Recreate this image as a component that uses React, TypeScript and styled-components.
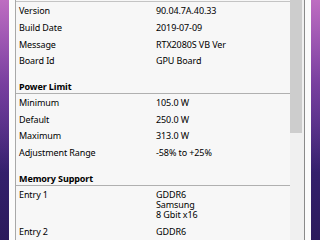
import React from "react";
import styled, { createGlobalStyle } from "styled-components";

const Global = createGlobalStyle`
  html, body { margin: 0; padding: 0; }
  body {
    width: 320px;
    height: 240px;
    overflow: hidden;
    background:
      linear-gradient(180deg, rgba(196,112,196,0.95) 0%, rgba(150,76,176,0.65) 35%, rgba(40,20,90,0) 72%),
      linear-gradient(180deg, #4a2a8e 0%, #3b2478 50%, #2b1a5c 100%);
  }
`;

const Desktop = styled.div`
  width: 320px;
  height: 240px;
  display: flex;
  padding-left: 9px;
  box-sizing: border-box;
  overflow: hidden;
`;

const Window = styled.div`
  width: 302px;
  height: 240px;
  background: #fbfbfb;
  padding: 0 6px;
  box-sizing: border-box;
  display: flex;
`;

const Panel = styled.div`
  flex: 1;
  display: flex;
  border-left: 1px solid #a8a8a8;
  border-right: 1px solid #8a8a8a;
  background: #f7f7f7;
  overflow: hidden;
`;

const List = styled.div`
  flex: 1;
  display: flex;
  flex-direction: column;
  font-family: "Noto Sans", "Open Sans", sans-serif;
  font-size: 9px;
  letter-spacing: -0.1px;
  color: #000;
`;

const TopRule = styled.div`
  height: 1px;
  margin: 1px 0 1px;
  background: #c4c4c4;
`;

const Row = styled.div`
  display: grid;
  grid-template-columns: 137px 1fr;
  padding: 3.7px 0 2.7px 3px;
  line-height: 10.3px;
  white-space: nowrap;
`;

const Value = styled.div`
  display: flex;
  flex-direction: column;
`;

const Header = styled.div<{ $gap: number }>`
  margin-top: ${(p) => p.$gap}px;
  padding: 5px 0 2px 3px;
  height: 9px;
  line-height: 10px;
  font-weight: 700;
  border-bottom: 1px solid #b0b0b0;
`;

const Scrollbar = styled.div`
  width: 14px;
  background: #f0f0f0;
  display: flex;
  flex-direction: column;
`;

const Thumb = styled.div`
  width: 12px;
  height: 133px;
  background: #cdcdcd;
`;

type Item = { label: string; value: string[] };

const general: Item[] = [
  { label: "Version", value: ["90.04.7A.40.33"] },
  { label: "Build Date", value: ["2019-07-09"] },
  { label: "Message", value: ["RTX2080S VB Ver"] },
  { label: "Board Id", value: ["GPU Board"] },
];

const power: Item[] = [
  { label: "Minimum", value: ["105.0 W"] },
  { label: "Default", value: ["250.0 W"] },
  { label: "Maximum", value: ["313.0 W"] },
  { label: "Adjustment Range", value: ["-58% to +25%"] },
];

const memory: Item[] = [
  { label: "Entry 1", value: ["GDDR6", "Samsung", "8 Gbit x16"] },
  { label: "Entry 2", value: ["GDDR6"] },
];

const Rows = ({ items }: { items: Item[] }) => (
  <>
    {items.map((it) => (
      <Row key={it.label}>
        <span>{it.label}</span>
        <Value>
          {it.value.map((v) => (
            <span key={v}>{v}</span>
          ))}
        </Value>
      </Row>
    ))}
  </>
);

export default function App() {
  return (
    <>
      <Global />
      <Desktop>
        <Window>
          <Panel>
            <List>
              <TopRule />
              <Rows items={general} />
              <Header $gap={8}>Power Limit</Header>
              <Rows items={power} />
              <Header $gap={8}>Memory Support</Header>
              <Rows items={memory} />
            </List>
            <Scrollbar>
              <Thumb />
            </Scrollbar>
          </Panel>
        </Window>
      </Desktop>
    </>
  );
}
